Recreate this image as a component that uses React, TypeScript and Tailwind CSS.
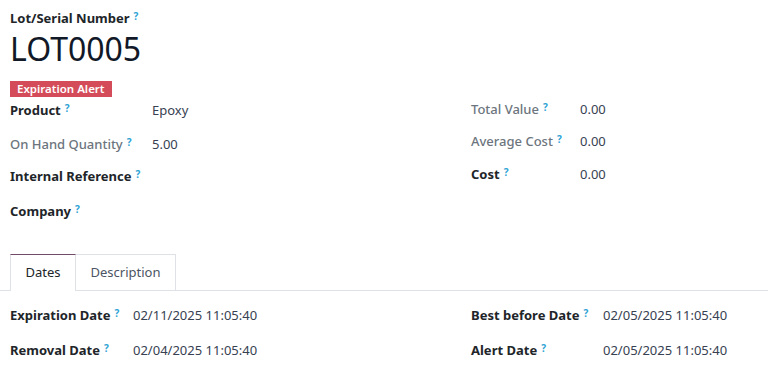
import React from 'react';

const Help = () => (
  <sup className="ml-[4px] text-[10px] font-bold text-[#2ea3d4] relative -top-[3px]">?</sup>
);

interface FieldProps {
  label: string;
  value?: string;
  labelW: string;
  muted?: boolean;
  className?: string;
}

const Field: React.FC<FieldProps> = ({ label, value, labelW, muted, className }) => (
  <div className={`flex h-[20px] items-center leading-[20px] ${className ?? ''}`}>
    <div
      className={`${labelW} shrink-0 ${muted ? 'text-[#6c757d] font-medium' : 'text-[#212529] font-bold'}`}
    >
      {label}
      <Help />
    </div>
    <div className="text-[#374151]">{value}</div>
  </div>
);

export default function App() {
  return (
    <div
      className="w-[768px] h-[379px] overflow-hidden bg-white text-[13px] text-[#374151]"
      style={{ fontFamily: '"Noto Sans", "Open Sans", sans-serif' }}
    >
      <div className="px-[10px] pt-[8px]">
        <div className="h-[20px] leading-[20px] font-bold text-[#212529]">
          Lot/Serial Number
          <Help />
        </div>
        <div className="h-[40px] leading-[40px] text-[32px] text-[#111827] mt-[1px]">LOT0005</div>
        <div className="mt-[12px] flex">
          <span className="bg-[#d44c59] text-white font-semibold text-[11.5px] leading-[16px] h-[16px] px-[7px]">
            Expiration Alert
          </span>
        </div>

        <div className="flex">
          <div className="w-[461px] flex flex-col">
            <Field className="mt-[3px]" label="Product" value="Epoxy" labelW="w-[142px]" />
            <Field className="mt-[14px]" label="On Hand Quantity" value="5.00" labelW="w-[142px]" muted />
            <Field className="mt-[12px]" label="Internal Reference" labelW="w-[142px]" />
            <Field className="mt-[15px]" label="Company" labelW="w-[142px]" />
          </div>
          <div className="flex-1 flex flex-col">
            <Field className="mt-[2px]" label="Total Value" value="0.00" labelW="w-[109px]" muted />
            <Field className="mt-[12px]" label="Average Cost" value="0.00" labelW="w-[109px]" muted />
            <Field className="mt-[13px]" label="Cost" value="0.00" labelW="w-[109px]" />
          </div>
        </div>
      </div>

      <div className="mt-[33px] flex border-b border-[#dee2e6] pl-[10px] h-[37px]">
        <div className="w-[66px] h-[37px] -mb-px bg-white border-x border-[#dee2e6] border-t border-t-[#714b67] flex items-center justify-center text-[#212529]">
          Dates
        </div>
        <div className="w-[100px] h-[36px] border-r border-t border-[#dee2e6] flex items-center justify-center text-[#4b5563]">
          Description
        </div>
      </div>

      <div className="flex px-[10px]">
        <div className="w-[461px] flex flex-col">
          <Field className="mt-[14px]" label="Expiration Date" value="02/11/2025 11:05:40" labelW="w-[123px]" />
          <Field className="mt-[15px]" label="Removal Date" value="02/04/2025 11:05:40" labelW="w-[123px]" />
        </div>
        <div className="flex-1 flex flex-col">
          <Field className="mt-[14px]" label="Best before Date" value="02/05/2025 11:05:40" labelW="w-[132px]" />
          <Field className="mt-[15px]" label="Alert Date" value="02/05/2025 11:05:40" labelW="w-[132px]" />
        </div>
      </div>
    </div>
  );
}
